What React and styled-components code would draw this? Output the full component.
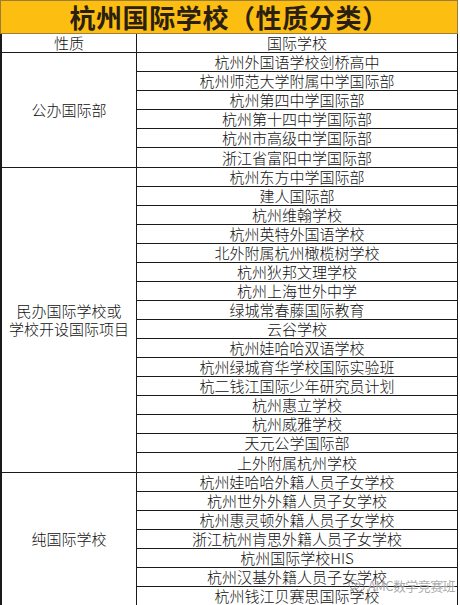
import styled, { createGlobalStyle } from 'styled-components';

const GlobalStyle = createGlobalStyle`
    html, body {
        margin: 0;
        padding: 0;
        background: #ffffff;
    }
    body {
        font-family: "Noto Sans CJK SC", "Noto Sans", sans-serif;
        color: #111;
    }
`

const Sheet = styled.div`
    position: relative;
    width: 458px;
    height: 605px;
    overflow: hidden;
`

const Title = styled.div`
    height: 32px;
    background: #fdbe12;
    border: 1px solid #a07c3a;
    display: flex;
    align-items: center;
    justify-content: center;
    font-size: 26px;
    line-height: 30px;
    font-weight: 700;
    color: #2a1f10;
    letter-spacing: 0.6px;
`

const Body = styled.div`
    border-left: 2px solid #1a1a1a;
    border-right: 1px solid #1a1a1a;
    border-bottom: 2px solid #1a1a1a;
`

const Section = styled.div`
    display: flex;
    border-bottom: 1px solid #1a1a1a;
    &:last-child {
        border-bottom: none;
    }
`

const Label = styled.div`
    width: 134px;
    flex: none;
    border-right: 1px solid #1a1a1a;
    display: flex;
    align-items: center;
    justify-content: center;
    text-align: center;
    font-size: 15px;
    font-weight: 300;
    line-height: 18px;
    white-space: pre-line;
`

const List = styled.div`
    flex: 1;
    display: flex;
    flex-direction: column;
`

const Cell = styled.div`
    height: 18px;
    border-bottom: 1px solid #1a1a1a;
    display: flex;
    align-items: center;
    justify-content: center;
    font-size: 15px;
    font-weight: 300;
    line-height: 16px;
    white-space: nowrap;
    &:last-child {
        border-bottom: none;
        height: ${props => props.$tall ? '19px' : '18px'};
    }
`

const Watermark = styled.div`
    position: absolute;
    left: 348px;
    top: 576px;
    display: flex;
    align-items: center;
    gap: 2px;
    font-size: 13px;
    letter-spacing: -0.6px;
    color: rgba(120, 120, 120, 0.65);
    text-shadow: 0 0 1px rgba(255, 255, 255, 0.9);
    pointer-events: none;
`

const sections = [
    {
        label: '公办国际部',
        schools: [
            '杭州外国语学校剑桥高中',
            '杭州师范大学附属中学国际部',
            '杭州第四中学国际部',
            '杭州第十四中学国际部',
            '杭州市高级中学国际部',
            '浙江省富阳中学国际部',
        ],
    },
    {
        label: '民办国际学校或\n学校开设国际项目',
        schools: [
            '杭州东方中学国际部',
            '建人国际部',
            '杭州维翰学校',
            '杭州英特外国语学校',
            '北外附属杭州橄榄树学校',
            '杭州狄邦文理学校',
            '杭州上海世外中学',
            '绿城常春藤国际教育',
            '云谷学校',
            '杭州娃哈哈双语学校',
            '杭州绿城育华学校国际实验班',
            '杭二钱江国际少年研究员计划',
            '杭州惠立学校',
            '杭州威雅学校',
            '天元公学国际部',
            '上外附属杭州学校',
        ],
    },
    {
        label: '纯国际学校',
        schools: [
            '杭州娃哈哈外籍人员子女学校',
            '杭州世外外籍人员子女学校',
            '杭州惠灵顿外籍人员子女学校',
            '浙江杭州肯思外籍人员子女学校',
            '杭州国际学校HIS',
            '杭州汉基外籍人员子女学校',
            '杭州钱江贝赛思国际学校',
        ],
    },
]

function WechatMark() {
    const c = 'rgba(120,120,120,0.7)';
    return (
        <svg width="18" height="14" viewBox="0 0 18 14" fill="none" stroke={c} strokeWidth="1">
            <ellipse cx="6.5" cy="5.5" rx="5.5" ry="4.5" />
            <path d="M3.5 9.5 L2.5 12 L5.5 10" />
            <ellipse cx="11.5" cy="8.5" rx="4.5" ry="3.5" />
            <circle cx="4.5" cy="4.5" r="0.6" fill={c} />
            <circle cx="8.5" cy="4.5" r="0.6" fill={c} />
        </svg>
    )
}

function App() {
    return (
        <Sheet>
            <GlobalStyle />
            <Title>杭州国际学校（性质分类）</Title>
            <Body>
                <Section>
                    <Label>性质</Label>
                    <List>
                        <Cell>国际学校</Cell>
                    </List>
                </Section>
                {sections.map((s, i) => (
                    <Section key={i}>
                        <Label>{s.label}</Label>
                        <List>
                            {s.schools.map((name) => (
                                <Cell key={name} $tall={i < sections.length - 1}>{name}</Cell>
                            ))}
                        </List>
                    </Section>
                ))}
            </Body>
            <Watermark>
                <WechatMark />
                <span>AMC数学竞赛班</span>
            </Watermark>
        </Sheet>
    );
}

export default App;
